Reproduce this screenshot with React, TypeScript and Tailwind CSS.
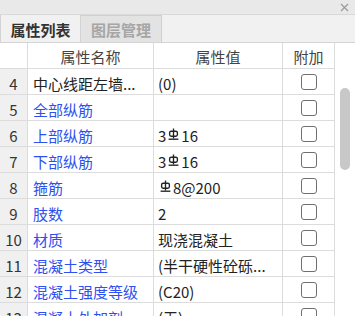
import React from "react";

const FONT = "font-['Noto_Sans_CJK_SC','Noto_Sans',sans-serif]";

// 三级钢筋符号
const Rebar = () => (
  <svg width="11" height="13" viewBox="0 0 11 13" className="inline-block mx-[2px] -mt-[2px]" fill="none" stroke="#222" strokeWidth="1.35">
    <path d="M5.5 0.5V10.5" />
    <rect x="1.6" y="3.2" width="7.8" height="5" rx="1.6" />
    <path d="M0.6 11.2H10.4" />
  </svg>
);

type Row = { n: number; name: string; blue: boolean; value: React.ReactNode };

const rows: Row[] = [
  { n: 4, name: "中心线距左墙...", blue: false, value: "(0)" },
  { n: 5, name: "全部纵筋", blue: true, value: "" },
  { n: 6, name: "上部纵筋", blue: true, value: <>3<Rebar />16</> },
  { n: 7, name: "下部纵筋", blue: true, value: <>3<Rebar />16</> },
  { n: 8, name: "箍筋", blue: true, value: <><Rebar />8@200</> },
  { n: 9, name: "肢数", blue: true, value: "2" },
  { n: 10, name: "材质", blue: true, value: "现浇混凝土" },
  { n: 11, name: "混凝土类型", blue: true, value: "(半干硬性砼砾..." },
  { n: 12, name: "混凝土强度等级", blue: true, value: "(C20)" },
  { n: 13, name: "混凝土外加剂", blue: true, value: "(无)" },
];

export default function App() {
  return (
    <div className={`w-[355px] h-[316px] overflow-hidden bg-white text-[15px] ${FONT}`}>
      {/* title bar */}
      <div className="h-[15px] bg-[#e9e9e9] border-b border-[#d9d9d9] flex items-center justify-end pr-[6px]">
        <svg width="9" height="9" viewBox="0 0 9 9" stroke="#9a9a9a" strokeWidth="1.2">
          <path d="M1 1L8 8M8 1L1 8" />
        </svg>
      </div>

      {/* tabs */}
      <div className="h-[28px] bg-[#f1f1f1] border-b border-[#d4d4d4] flex items-stretch">
        <div className="w-[81px] flex items-center justify-center border-r border-l border-[#d4d4d4] font-bold text-[#333] leading-none pt-[1px]">
          属性列表
        </div>
        <div className="w-[81px] flex items-center justify-center bg-[#e3e3e3] border-r border-t border-[#d0d0d0] font-bold text-[#a6a6a6] leading-none pt-[1px]">
          图层管理
        </div>
      </div>

      <div className="flex">
        {/* table */}
        <div className="w-[334px]">
          <div className="grid grid-cols-[28px_126px_129px_51px] h-[26px] border-b border-[#dcdcdc] text-[#444] leading-none">
            <div className="border-r border-[#dcdcdc]" />
            <div className="flex items-center justify-center border-r border-[#dcdcdc] pt-[1px]">属性名称</div>
            <div className="flex items-center justify-center border-r border-[#dcdcdc] pt-[1px]">属性值</div>
            <div className="flex items-center justify-center pt-[1px]">附加</div>
          </div>
          {rows.map((r) => (
            <div key={r.n} className="grid grid-cols-[28px_126px_129px_51px] h-[26px] border-b border-[#dcdcdc] leading-none">
              <div className="flex items-center justify-center bg-[#f0f0f0] border-r border-[#dcdcdc] text-[#333] pt-[3px]">{r.n}</div>
              <div className={`flex items-center pl-[5px] pt-[3px] border-r border-[#dcdcdc] whitespace-nowrap overflow-hidden ${r.blue ? "text-[#2f50f0]" : "text-[#222]"}`}>
                {r.name}
              </div>
              <div className="flex items-center pl-[4px] pt-[3px] border-r border-[#dcdcdc] text-[#222] whitespace-nowrap overflow-hidden">{r.value}</div>
              <div className="flex items-center justify-center">
                <div className="w-[16px] h-[16px] rounded-[3px] border border-[#707070] bg-white" />
              </div>
            </div>
          ))}
        </div>

        {/* scrollbar */}
        <div className="w-[21px] border-l border-[#dcdcdc] pt-[45px] flex justify-center">
          <div className="w-[10px] h-[82px] rounded-full bg-[#c8c8c8]" />
        </div>
      </div>
    </div>
  );
}
